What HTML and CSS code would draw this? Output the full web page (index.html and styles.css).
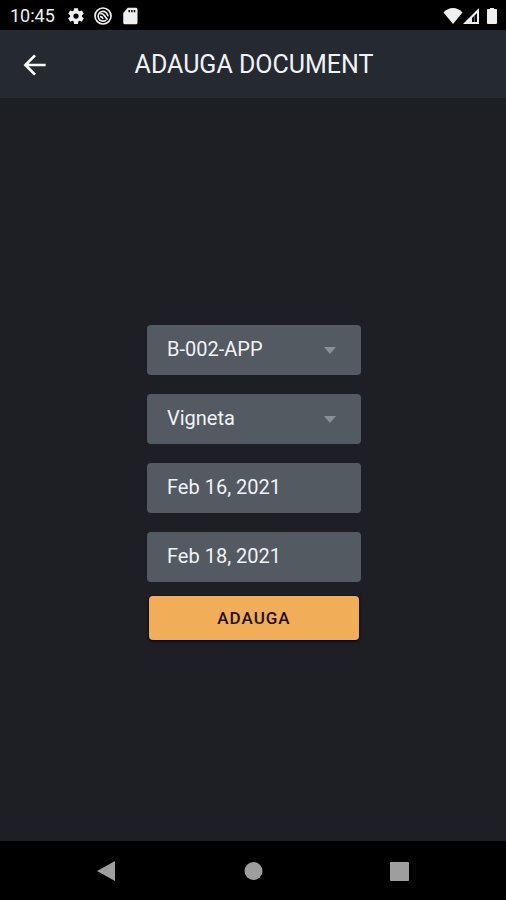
FILE: index.html
```html
<!DOCTYPE html>
<html lang="ro">
<head>
  <meta charset="utf-8">
  <meta name="viewport" content="width=device-width, initial-scale=1">
  <title>Adauga document</title>
  <link rel="stylesheet" href="styles.css">
</head>
<body>
  <div class="status-bar">
    <time class="clock">10:45</time>
    <svg class="status-icon" viewBox="0 0 24 24" aria-hidden="true"><path fill-rule="evenodd" d="M9.400 1.500h5.200l.5 3.200 1.700 1 3-1.200 2.600 4.500-2.500 2v2l2.500 2-2.600 4.500-3-1.200-1.700 1-.5 3.200H9.400l-.5-3.200-1.700-1-3 1.200L1.600 15l2.500-2v-2L1.600 9l2.600-4.500 3 1.200 1.700-1zM12 8.500a3.500 3.500 0 1 0 0 7 3.500 3.500 0 0 0 0-7z"/></svg>
    <svg class="status-icon" viewBox="0 0 24 24" aria-hidden="true"><g fill="none" stroke="currentColor"><circle cx="12" cy="12" r="10.700" stroke-width="2.200"/><path stroke-width="2.200" d="M16 17.500A6.500 6.500 0 1 1 18.500 12.500M8.500 9.500q3-1.500 5 1.500l4.500 6M8 13q3-.5 4 3"/></g></svg>
    <svg class="status-icon" viewBox="0 0 24 24" aria-hidden="true"><path fill-rule="evenodd" d="M9 1h11q2 0 2 2v18q0 2-2 2H5q-2 0-2-2V8zM10 4v3h2V4zm3.500 0v3h2V4zm3.500 0v3h2V4z"/></svg>
    <div class="signals">
      <svg class="wifi" viewBox="0 0 20 16" aria-hidden="true"><path d="M10 16 .5 4.500Q4.500 0 10 0t9.500 4.500z"/></svg>
      <svg class="cell" viewBox="0 0 16 16" aria-hidden="true"><path fill-rule="evenodd" d="M16 0v16H0zM14 5 9 10v4h5z"/><path class="cell-dim" d="M11 8h1v6h-1z"/></svg>
      <svg class="battery" viewBox="0 0 12 18" aria-hidden="true"><path d="M4 1h4v1h2q1 0 1 1v13q0 1-1 1H2q-1 0-1-1V3q0-1 1-1h2z"/></svg>
    </div>
  </div>
  <header class="app-bar">
    <button class="back" type="button" aria-label="Inapoi"><svg viewBox="0 0 24 24" aria-hidden="true"><path d="M4.500 12H20M12 4.800 4.800 12l7.200 7.200"/></svg></button>
    <h1 class="title">ADAUGA DOCUMENT</h1>
  </header>
  <main class="content">
    <form class="form">
      <div class="select-box">
        <select class="field" aria-label="Vehicul"><option>B-002-APP</option></select>
        <svg class="caret" viewBox="0 0 12 7" aria-hidden="true"><path d="M0 0h12L6 7z"/></svg>
      </div>
      <div class="select-box">
        <select class="field" aria-label="Tip document"><option>Vigneta</option></select>
        <svg class="caret" viewBox="0 0 12 7" aria-hidden="true"><path d="M0 0h12L6 7z"/></svg>
      </div>
      <input class="field" type="text" aria-label="Data inceput" value="Feb 16, 2021">
      <input class="field" type="text" aria-label="Data sfarsit" value="Feb 18, 2021">
      <button class="submit" type="button">ADAUGA</button>
    </form>
  </main>
  <nav class="nav-bar">
    <button class="nav-button" type="button" aria-label="Back"><svg viewBox="0 0 20 22" aria-hidden="true"><path d="M19 1v20L1 11z"/></svg></button>
    <button class="nav-button" type="button" aria-label="Home"><svg viewBox="0 0 20 22" aria-hidden="true"><circle cx="10.500" cy="11" r="9"/></svg></button>
    <button class="nav-button" type="button" aria-label="Recents"><svg viewBox="0 0 20 22" aria-hidden="true"><rect y="2" width="19" height="19" rx="1"/></svg></button>
  </nav>
</body>
</html>
```
FILE: styles.css
```css
* {
  box-sizing: border-box;
}

body {
  margin: 0;
  min-height: 100vh;
  display: flex;
  flex-direction: column;
  background: #1e1f25;
  color: #f0f3f6;
  font-family: Roboto, "Liberation Sans", sans-serif;
}

button {
  border: 0;
  padding: 0;
  font-family: inherit;
}

svg {
  display: block;
  fill: currentColor;
}

.status-bar {
  display: flex;
  align-items: center;
  height: 30px;
  padding: 1px 8px 0 10px;
  background: #000;
  color: #f0f0f0;
}

.clock {
  margin-right: 12px;
  font-size: 18px;
  line-height: 20px;
}

.status-icon {
  width: 18px;
  height: 18px;
  margin-right: 9px;
}

.signals {
  display: flex;
  align-items: center;
  margin-left: auto;
}

.wifi {
  width: 20px;
  height: 16px;
}

.cell {
  width: 16px;
  height: 16px;
  margin-right: 7px;
}

.cell-dim {
  fill: #555;
}

.battery {
  width: 12px;
  height: 18px;
}

.app-bar {
  display: grid;
  grid-template-columns: 32px 1fr 32px;
  align-items: center;
  height: 68px;
  padding: 1px 17px 0 19px;
  background: #252a30;
}

.back {
  background: none;
  color: #fff;
}

.back svg {
  width: 32px;
  height: 32px;
  fill: none;
  stroke: currentColor;
  stroke-width: 2;
}

.title {
  margin: 0;
  font-size: 25px;
  font-weight: 400;
  line-height: 34px;
  text-align: center;
}

.content {
  flex: 1;
  display: flex;
  align-items: center;
  justify-content: center;
  padding: 26px 0 0 2px;
}

.form {
  display: flex;
  flex-direction: column;
  width: 214px;
}

.select-box {
  position: relative;
}

.field {
  appearance: none;
  display: block;
  width: 100%;
  height: 50px;
  margin: 0 0 19px;
  padding: 0 20px 2px;
  border: 0;
  border-radius: 4px;
  background: #535a61;
  color: #f0f3f6;
  font-family: inherit;
  font-size: 20px;
}

.caret {
  position: absolute;
  top: 22px;
  right: 25px;
  width: 12px;
  height: 7px;
  color: #8b9095;
  pointer-events: none;
}

.submit {
  height: 44px;
  margin: -5px 2px 0;
  border-radius: 4px;
  background: #f1ad57;
  color: #1c1208;
  box-shadow: 0 1px 3px #000;
  font-size: 17px;
  font-weight: 500;
  letter-spacing: 1px;
}

.nav-bar {
  display: flex;
  align-items: center;
  justify-content: space-between;
  height: 59px;
  padding: 0 96px;
  background: #000;
}

.nav-button {
  background: none;
  color: #9e9e9e;
}

.nav-button svg {
  width: 20px;
  height: 22px;
}
```
